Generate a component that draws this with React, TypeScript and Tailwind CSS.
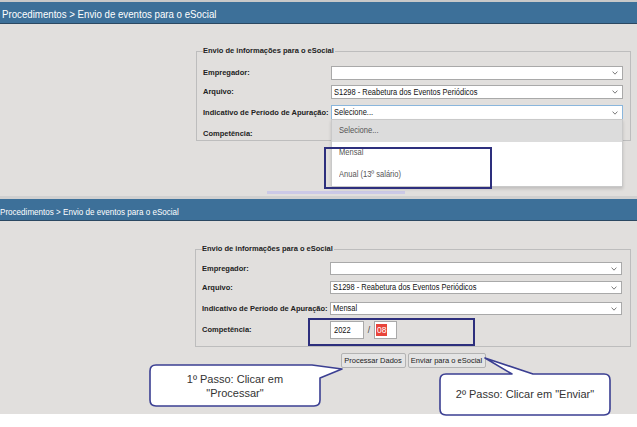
import { clsx } from 'clsx';

const sans = "font-['Liberation_Sans',Arial,sans-serif]";
const labelCls = "w-[128px] shrink-0 font-['Liberation_Sans',Arial,sans-serif] text-[7.5px] font-bold leading-none text-[#222]";

function Chevron() {
  return (
    <svg
      width="6"
      height="4"
      viewBox="0 0 6 4"
      className="absolute right-[4px] top-1/2 -translate-y-1/2"
      aria-hidden="true"
    >
      <path d="M0.6 0.6 L3 3.2 L5.4 0.6" fill="none" stroke="#6b6b6b" strokeWidth="0.9" />
    </svg>
  );
}

// texto "condensado" (a fonte original não existe aqui)
function Narrow({ children, className }: { children: React.ReactNode; className?: string }) {
  return (
    <span className={clsx(sans, 'inline-block origin-left whitespace-nowrap', className)}>{children}</span>
  );
}

function FakeSelect({ value, h, focus, children }: { value: string; h: string; focus?: boolean; children?: React.ReactNode }) {
  return (
    <div
      className={clsx(
        'relative flex w-[292px] items-center bg-white pl-[2px]',
        focus ? 'border-[1.5px] border-[#8ab6dc]' : 'border border-[#a9a9a9]',
        h
      )}
    >
      <Narrow className="scale-x-[0.88] text-[8.5px] leading-none text-[#111]">{value}</Narrow>
      <Chevron />
      {children}
    </div>
  );
}

function Legend() {
  return (
    <legend className={clsx(sans, 'pr-[1px] text-[7.5px] font-bold leading-[10px] text-[#222]')}>
      Envio de informações para o eSocial
    </legend>
  );
}

export default function App() {
  return (
    <div className="h-[427px] w-[637px] overflow-hidden bg-white">
      {/* primeira captura */}
      <div className="h-[2px] bg-[#c9c9c9]" />
      <div className="h-[22px] border-b border-[#2b4861] bg-[#3d7099] pl-[2px] leading-[21px] text-white">
        <Narrow className="scale-x-[0.88] text-[11px]">Procedimentos &gt; Envio de eventos para o eSocial</Narrow>
      </div>
      <div className="relative h-[172px] bg-[#e1dfdd] pt-[22px]">
        <fieldset className="ml-[196px] w-[435px] border border-[#bdbdbd] pl-[6px] pr-[7px]">
          <Legend />
          <div className="flex flex-col pt-[10px]">
            <div className="flex h-[14px] items-center">
              <span className={labelCls}>Empregador:</span>
              <FakeSelect value="" h="h-[14px]" />
            </div>
            <div className="mt-[5px] flex h-[14px] items-center">
              <span className={labelCls}>Arquivo:</span>
              <FakeSelect value="S1298 - Reabetura dos Eventos Periódicos" h="h-[14px]" />
            </div>
            <div className="mt-[6px] flex h-[15px] items-center">
              <span className={labelCls}>Indicativo de Período de Apuração:</span>
              <FakeSelect value="Selecione..." h="h-[15px]" focus>
                <div className="absolute left-[-1.5px] top-full z-10 w-[292px] border border-[#c9c9c9] bg-white text-[9px] text-[#555] shadow-[0_2px_3px_rgba(0,0,0,0.15)]">
                  <div className="flex h-[22px] items-center bg-[#dcdcdc] pl-[7px]">
                    <Narrow className="scale-x-[0.84]">Selecione...</Narrow>
                  </div>
                  <div className="flex h-[21px] items-center pl-[7px]">
                    <Narrow className="scale-x-[0.84]">Mensal</Narrow>
                  </div>
                  <div className="flex h-[23px] items-center pl-[7px]">
                    <Narrow className="scale-x-[0.84]">Anual (13º salário)</Narrow>
                  </div>
                </div>
              </FakeSelect>
            </div>
            <div className="mt-[8px] flex h-[12px] items-center">
              <span className={labelCls}>Competência:</span>
            </div>
          </div>
        </fieldset>
        <div className="absolute left-[324px] top-[123px] z-20 h-[42px] w-[168px] border-2 border-[#2d2f7d]" />
        <div className="absolute left-[267px] top-[167px] h-[3px] w-[138px] bg-[#cbc9e6]" />
      </div>

      {/* segunda captura */}
      <div className="h-[3px] bg-[#d0d0d0]" />
      <div className="h-[22px] border-b border-[#2b4861] bg-[#3d7099] leading-[21px] text-white">
        <Narrow className="scale-x-[0.85] text-[9.5px]">Procedimentos &gt; Envio de eventos para o eSocial</Narrow>
      </div>
      <div className="relative h-[193px] bg-[#e1dfdd] pt-[23px]">
        <fieldset className="ml-[195px] w-[436px] border border-[#bdbdbd] pb-[7px] pl-[6px] pr-[7px]">
          <Legend />
          <div className="flex flex-col pt-[8px]">
            <div className="flex h-[13px] items-center">
              <span className={labelCls}>Empregador:</span>
              <FakeSelect value="" h="h-[13px]" />
            </div>
            <div className="mt-[6px] flex h-[13px] items-center">
              <span className={labelCls}>Arquivo:</span>
              <FakeSelect value="S1298 - Reabetura dos Eventos Periódicos" h="h-[13px]" />
            </div>
            <div className="mt-[8px] flex h-[13px] items-center">
              <span className={labelCls}>Indicativo de Período de Apuração:</span>
              <FakeSelect value="Mensal" h="h-[13px]" />
            </div>
            <div className="mt-[6px] flex h-[18px] items-center">
              <span className={labelCls}>Competência:</span>
              <div className="flex items-center text-[8.5px] text-[#111]">
                <div className="flex h-[18px] w-[34px] items-center border border-[#a9a9a9] bg-white pl-[3px]">
                  <Narrow className="scale-x-[0.88]">2022</Narrow>
                </div>
                <span className={clsx(sans, 'w-[10px] text-center text-[#444]')}>/</span>
                <div className="flex h-[18px] w-[23px] items-center border border-[#a9a9a9] bg-white pl-[1px]">
                  <span className={clsx(sans, 'bg-[#e8443a] px-[1px] leading-[12px] text-white')}>08</span>
                </div>
              </div>
            </div>
          </div>
        </fieldset>

        <div className="ml-[195px] mt-[6px] flex w-[436px] justify-center gap-[2px]">
          <button className={clsx(sans, 'h-[15px] w-[65px] rounded-[2px] border border-[#b3b3b3] bg-[#e4e4e4] text-[7.5px] text-[#222]')}>
            Processar Dados
          </button>
          <button className={clsx(sans, 'h-[15px] w-[78px] rounded-[2px] border border-[#b3b3b3] bg-[#e4e4e4] text-[7.5px] text-[#222]')}>
            Enviar para o eSocial
          </button>
        </div>

        <div className="absolute left-[308px] top-[97px] h-[28px] w-[167px] border-2 border-[#2d2f7d]" />

        <svg
          className="pointer-events-none absolute left-0 top-0 overflow-visible"
          width="637"
          height="200"
          viewBox="0 221 637 200"
          aria-hidden="true"
        >
          <path
            d="M156 365 H312 L342 369 L320 378 V400 Q320 406 314 406 H156 Q150 406 150 400 V371 Q150 365 156 365 Z"
            fill="#ffffff"
            stroke="#3b3f92"
            strokeWidth="1.6"
            strokeLinejoin="round"
          />
          <path
            d="M446 374 H512 L485 358 L533 374 H604 Q610 374 610 380 V409 Q610 415 604 415 H446 Q440 415 440 409 V380 Q440 374 446 374 Z"
            fill="#ffffff"
            stroke="#3b3f92"
            strokeWidth="1.6"
            strokeLinejoin="round"
          />
        </svg>
        <div className={clsx(sans, 'absolute left-[150px] top-[144px] flex h-[41px] w-[170px] flex-col items-center justify-center text-[11px] leading-[14px] text-[#333]')}>
          <span>1º Passo: Clicar em</span>
          <span>"Processar"</span>
        </div>
        <div className={clsx(sans, 'absolute left-[440px] top-[153px] flex h-[41px] w-[170px] items-center justify-center text-[11px] text-[#333]')}>
          2º Passo: Clicar em "Enviar"
        </div>
      </div>
    </div>
  );
}
